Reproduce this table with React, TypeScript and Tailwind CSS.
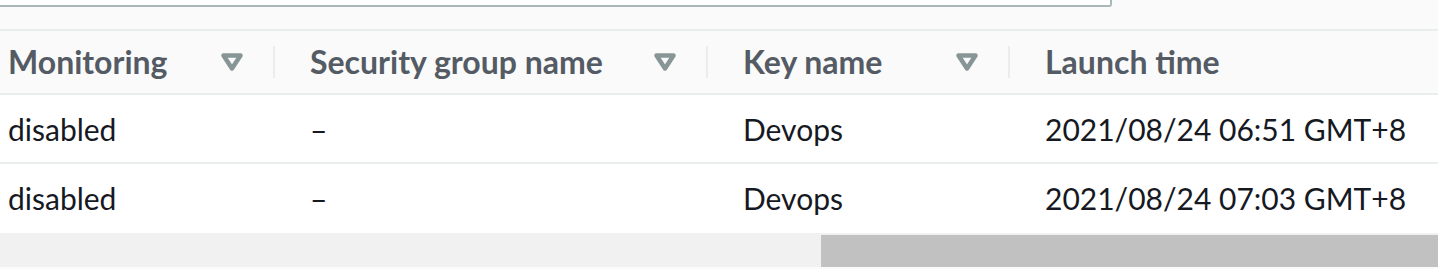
import React from "react";

interface Instance {
  monitoring: string;
  securityGroup: string;
  keyName: string;
  launchTime: string;
}

const rows: Instance[] = [
  { monitoring: "disabled", securityGroup: "–", keyName: "Devops", launchTime: "2021/08/24 06:51 GMT+8" },
  { monitoring: "disabled", securityGroup: "–", keyName: "Devops", launchTime: "2021/08/24 07:03 GMT+8" },
];

const FilterIcon: React.FC = () => (
  <svg width="24" height="20" viewBox="0 0 24 20" className="shrink-0">
    <path d="M3.5 3.5 H20.5 L12 16.5 Z" fill="none" stroke="#879596" strokeWidth="4.5" strokeLinejoin="round" />
  </svg>
);

const HeaderCell: React.FC<{ label: string; filter?: boolean; first?: boolean }> = ({ label, filter, first }) => (
  <div className={`flex items-center h-full ${first ? "pl-2" : "pl-[35px]"}`}>
    <span className="font-bold text-[32px] text-[#545b64] whitespace-nowrap">{label}</span>
    {filter && (
      <div className="ml-auto flex items-center">
        <FilterIcon />
        <div className="ml-[29px] w-[2px] h-[32px] bg-[#eaeded]" />
      </div>
    )}
  </div>
);

const App: React.FC = () => {
  return (
    <div
      className="w-[1438px] h-[269px] overflow-hidden bg-[#fafafa] text-[30px] leading-none"
      style={{ fontFamily: "Lato, 'Noto Sans', sans-serif" }}
    >
      {/* bottom of search input */}
      <div className="w-[1112px] h-[7px] bg-white border-b-2 border-r-2 border-[#aab7b8] rounded-br-[3px]" />
      <div className="h-[22px]" />

      <div className="border-t-2 border-[#eaeded]">
        <div className="grid grid-cols-[275px_433px_302px_1fr] h-[64px] border-b-2 border-[#eaeded]">
          <HeaderCell label="Monitoring" filter first />
          <HeaderCell label="Security group name" filter />
          <HeaderCell label="Key name" filter />
          <HeaderCell label="Launch time" />
        </div>

        {rows.map((r, i) => (
          <div
            key={i}
            className={`grid grid-cols-[275px_433px_302px_1fr] h-[69px] bg-white text-[#16191f] border-b-2 ${
              i === rows.length - 1 ? "border-white" : "border-[#eaeded]"
            }`}
          >
            <div className="flex items-center pl-2">{r.monitoring}</div>
            <div className="flex items-center pl-[35px]">{r.securityGroup}</div>
            <div className="flex items-center pl-[35px]">{r.keyName}</div>
            <div className="flex items-center pl-[35px] whitespace-nowrap">{r.launchTime}</div>
          </div>
        ))}
      </div>

      {/* horizontal scrollbar */}
      <div className="h-[34px] bg-[#f1f1f1] pt-[2px]">
        <div className="ml-[821px] h-[32px] bg-[#c1c1c1]" />
      </div>
    </div>
  );
};

export default App;
